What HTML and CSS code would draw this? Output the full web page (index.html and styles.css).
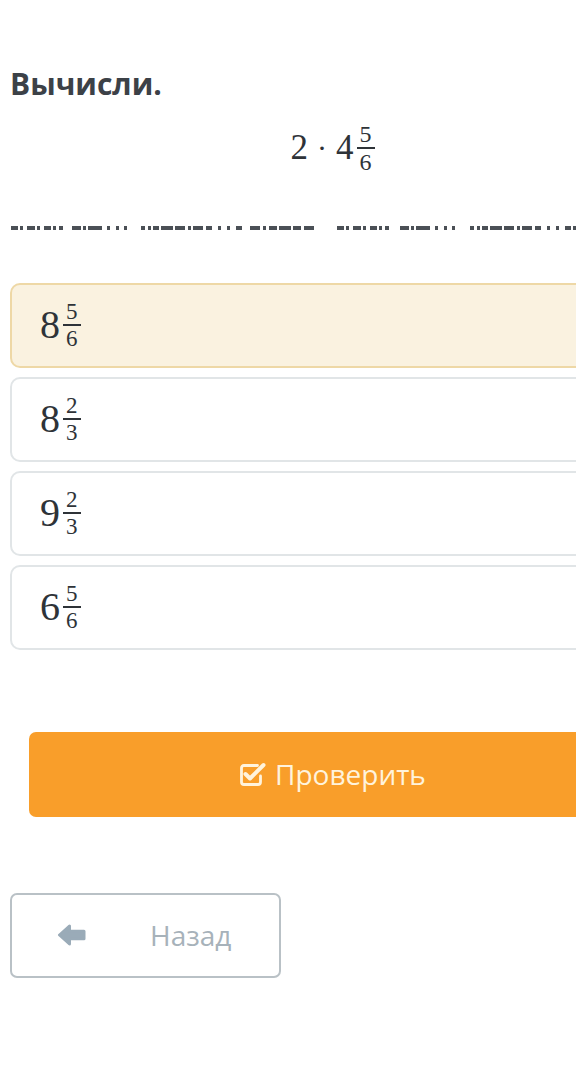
FILE: index.html
```html
<!DOCTYPE html>
<html lang="ru">
<head>
<meta charset="utf-8">
<title>Вычисли</title>
<link rel="stylesheet" href="styles.css">
</head>
<body>
<main class="page">
  <h1 class="title">Вычисли.</h1>
  <div class="question">
    <span class="q-num">2</span>
    <span class="q-dot">·</span>
    <span class="q-num">4</span>
    <span class="frac q-frac"><span class="fn">5</span><span class="fbar"></span><span class="fn">6</span></span>
  </div>
  <svg class="cut-line" width="576" height="4" viewBox="0 0 576 4">
    <g fill="#4b5056">
      <rect x="11" y="0" width="7" height="4"/><rect x="20" y="0" width="3" height="4"/><rect x="27" y="0" width="8" height="4"/><rect x="37" y="0" width="3" height="4"/><rect x="44" y="0" width="7" height="4"/><rect x="53" y="0" width="3" height="4"/><rect x="59" y="0" width="4" height="4"/>
      <rect x="72" y="0" width="9" height="4"/><rect x="83" y="0" width="3" height="4"/><rect x="88" y="0" width="14" height="4"/><rect x="107" y="0" width="3" height="4"/><rect x="116" y="0" width="3" height="4"/><rect x="124" y="0" width="3" height="4"/>
      <rect x="141" y="0" width="4" height="4"/><rect x="148" y="0" width="3" height="4"/><rect x="153" y="0" width="6" height="4"/><rect x="161" y="0" width="12" height="4"/><rect x="175" y="0" width="10" height="4"/><rect x="188" y="0" width="3" height="4"/><rect x="193" y="0" width="10" height="4"/><rect x="206" y="0" width="6" height="4"/><rect x="218" y="0" width="3" height="4"/><rect x="227" y="0" width="3" height="4"/><rect x="236" y="0" width="6" height="4"/><rect x="250" y="0" width="10" height="4"/><rect x="263" y="0" width="3" height="4"/><rect x="269" y="0" width="8" height="4"/><rect x="279" y="0" width="12" height="4"/><rect x="293" y="0" width="8" height="4"/><rect x="304" y="0" width="10" height="4"/>
      <rect x="337" y="0" width="7" height="4"/><rect x="346" y="0" width="3" height="4"/><rect x="353" y="0" width="8" height="4"/><rect x="363" y="0" width="3" height="4"/><rect x="370" y="0" width="7" height="4"/><rect x="379" y="0" width="3" height="4"/><rect x="385" y="0" width="4" height="4"/>
      <rect x="400" y="0" width="9" height="4"/><rect x="411" y="0" width="3" height="4"/><rect x="416" y="0" width="14" height="4"/><rect x="435" y="0" width="3" height="4"/><rect x="444" y="0" width="3" height="4"/><rect x="452" y="0" width="3" height="4"/>
      <rect x="470" y="0" width="4" height="4"/><rect x="477" y="0" width="3" height="4"/><rect x="482" y="0" width="6" height="4"/><rect x="490" y="0" width="12" height="4"/><rect x="504" y="0" width="10" height="4"/><rect x="517" y="0" width="3" height="4"/><rect x="522" y="0" width="10" height="4"/><rect x="535" y="0" width="6" height="4"/><rect x="547" y="0" width="3" height="4"/><rect x="556" y="0" width="3" height="4"/><rect x="565" y="0" width="6" height="4"/><rect x="573" y="0" width="3" height="4"/>
    </g>
  </svg>
  <ul class="options">
    <li class="option selected"><span class="o-num">8</span><span class="frac o-frac"><span class="fn">5</span><span class="fbar"></span><span class="fn">6</span></span></li>
    <li class="option"><span class="o-num">8</span><span class="frac o-frac"><span class="fn">2</span><span class="fbar"></span><span class="fn">3</span></span></li>
    <li class="option"><span class="o-num">9</span><span class="frac o-frac"><span class="fn">2</span><span class="fbar"></span><span class="fn">3</span></span></li>
    <li class="option"><span class="o-num">6</span><span class="frac o-frac"><span class="fn">5</span><span class="fbar"></span><span class="fn">6</span></span></li>
  </ul>
  <button class="check-btn" type="button">
    <svg class="check-icon" width="28" height="26" viewBox="0 0 28 26">
      <path d="M18.5 4.5 H5 Q2.5 4.5 2.5 7 V21 Q2.5 23.5 5 23.5 H19 Q21.5 23.5 21.5 21 V15" fill="none" stroke="#fff3dc" stroke-width="2.8" stroke-linecap="round"/>
      <path d="M6.5 13 L11 17.5 L24.5 4" fill="none" stroke="#fff3dc" stroke-width="4" stroke-linecap="round" stroke-linejoin="round"/>
    </svg>
    <span>Проверить</span>
  </button>
  <button class="back-btn" type="button">
    <svg class="back-icon" width="30" height="22" viewBox="0 0 30 22">
      <path d="M2.5 11 L12.5 2 L12.5 7.2 L27 7.2 L27 14.8 L12.5 14.8 L12.5 20 Z" fill="#9aabb8" stroke="#9aabb8" stroke-width="3" stroke-linejoin="round"/>
    </svg>
    <span>Назад</span>
  </button>
</main>
</body>
</html>
```
FILE: styles.css
```css
html {
  overflow: hidden;
}
body {
  margin: 0;
  background: #ffffff;
  font-family: "Open Sans", "Noto Sans", sans-serif;
}
.page {
  width: 645px;
  padding-left: 10px;
  display: flex;
  flex-direction: column;
}
.title {
  margin: 64px 0 0 0;
  font-size: 30px;
  line-height: 40px;
  font-weight: 700;
  color: #3c4147;
}
.question {
  margin-top: 18px;
  display: flex;
  align-items: center;
  justify-content: center;
  font-family: "Liberation Serif", "DejaVu Serif", serif;
  color: #2e3338;
}
.q-num {
  font-size: 35px;
  line-height: 1;
}
.q-dot {
  font-size: 30px;
  line-height: 1;
  margin: 0 9px;
}
.frac {
  display: inline-flex;
  flex-direction: column;
  align-items: center;
  font-family: "Liberation Serif", "DejaVu Serif", serif;
}
.fn {
  line-height: 1;
  padding: 0 3px;
}
.fbar {
  align-self: stretch;
  height: 1.5px;
  margin: 1px 0;
  background: #2e3338;
}
.q-frac {
  font-size: 24px;
  margin-left: 3px;
}
.cut-line {
  display: block;
  margin: 52px 0 0 -10px;
}
.options {
  list-style: none;
  margin: 53px 0 0 0;
  padding: 0;
  display: flex;
  flex-direction: column;
  gap: 9px;
}
.option {
  box-sizing: border-box;
  height: 85px;
  border: 2px solid #e1e5e7;
  border-radius: 10px;
  background: #ffffff;
  display: flex;
  align-items: center;
  padding-left: 28px;
  color: #2e3338;
}
.option.selected {
  background: #faf2e0;
  border-color: #eed8a6;
}
.o-num {
  font-family: "Liberation Serif", "DejaVu Serif", serif;
  font-size: 40px;
  line-height: 1;
}
.o-frac {
  font-size: 23px;
  margin-left: 3px;
}
.check-btn {
  margin: 82px 19px 0 19px;
  height: 85px;
  border: none;
  border-radius: 7px;
  background: #f99e2a;
  color: #fff3dc;
  font-family: "Open Sans", "Noto Sans", sans-serif;
  font-size: 28px;
  display: flex;
  align-items: center;
  justify-content: center;
  gap: 8px;
  padding: 0;
}
.check-icon {
  display: block;
}
.back-btn {
  margin-top: 76px;
  align-self: flex-start;
  box-sizing: border-box;
  width: 271px;
  height: 85px;
  border: 2px solid #b9c1c6;
  border-radius: 7px;
  background: #ffffff;
  color: #a7b2ba;
  font-family: "Open Sans", "Noto Sans", sans-serif;
  font-size: 28px;
  display: flex;
  align-items: center;
  padding: 0 0 0 45px;
  gap: 63px;
}
.back-icon {
  display: block;
}
```
